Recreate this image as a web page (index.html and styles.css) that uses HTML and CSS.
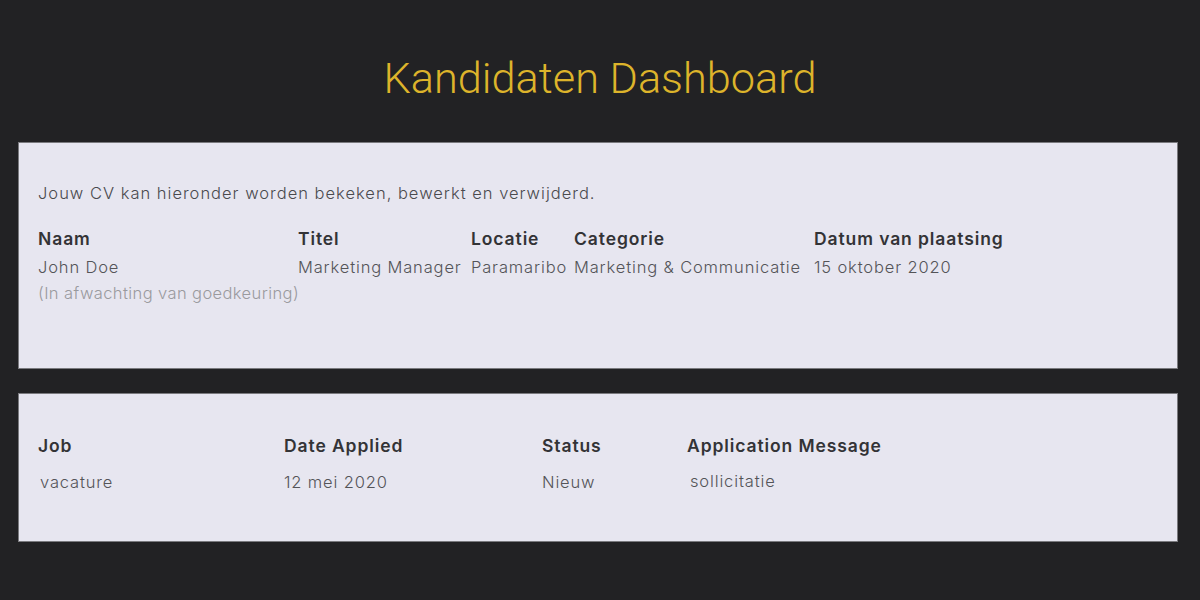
FILE: index.html
```html
<!DOCTYPE html>
<html lang="nl">
<head>
<meta charset="utf-8">
<title>Kandidaten Dashboard</title>
<link rel="stylesheet" href="styles.css">
</head>
<body>
<h1 class="page-title">Kandidaten Dashboard</h1>

<section class="card card-cv">
  <p class="intro">Jouw CV kan hieronder worden bekeken, bewerkt en verwijderd.</p>
  <div class="cv-grid">
    <div class="th">Naam</div>
    <div class="th">Titel</div>
    <div class="th">Locatie</div>
    <div class="th">Categorie</div>
    <div class="th">Datum van plaatsing</div>
    <div class="td">John Doe<span class="pending">(In afwachting van goedkeuring)</span></div>
    <div class="td">Marketing Manager</div>
    <div class="td">Paramaribo</div>
    <div class="td">Marketing &amp; Communicatie</div>
    <div class="td">15 oktober 2020</div>
  </div>
</section>

<section class="card card-apps">
  <div class="app-grid">
    <div class="th">Job</div>
    <div class="th">Date Applied</div>
    <div class="th">Status</div>
    <div class="th">Application Message</div>
    <div class="td td-job">vacature</div>
    <div class="td">12 mei 2020</div>
    <div class="td">Nieuw</div>
    <div class="td td-msg">sollicitatie</div>
  </div>
</section>
</body>
</html>
```

FILE: styles.css
```css
html, body {
  margin: 0;
  padding: 0;
}

body {
  background: #222224;
  font-family: "Inter", "Open Sans", sans-serif;
  font-weight: 300;
  color: #4a4a4e;
  padding-top: 53px;
  padding-bottom: 40px;
}

.page-title {
  margin: 0 0 37px;
  text-align: center;
  font-family: "Roboto", sans-serif;
  font-weight: 300;
  font-size: 43.3px;
  line-height: 52px;
  color: #ddb42b;
}

.card {
  margin: 0 22px 0 18px;
  background: #e7e6f0;
  border: 1px solid #7a7a7e;
  padding-left: 19px;
  padding-right: 19px;
}

.card-cv {
  padding-top: 38px;
  padding-bottom: 62px;
  margin-bottom: 24px;
}

.intro {
  margin: 0 0 21px;
  font-size: 16.5px;
  line-height: 24px;
  letter-spacing: 1px;
}

.th {
  font-weight: 600;
  font-size: 17.5px;
  line-height: 26px;
  color: #333336;
  white-space: nowrap;
  letter-spacing: 0.9px;
}

.td {
  font-size: 16.5px;
  line-height: 26px;
  color: #545458;
  white-space: nowrap;
  letter-spacing: 0.85px;
}

.cv-grid {
  display: grid;
  grid-template-columns: 260px 173px 103px 240px auto;
  row-gap: 2px;
}

.pending {
  display: block;
  color: #9a9a9e;
  letter-spacing: 0.4px;
}

.card-apps {
  padding-top: 39px;
  padding-bottom: 46px;
}

.app-grid {
  display: grid;
  grid-template-columns: 246px 258px 145px auto;
  row-gap: 10px;
}

.td-job {
  padding-left: 2px;
}

.td-msg {
  padding-left: 3px;
  margin-top: -1px;
}
```
